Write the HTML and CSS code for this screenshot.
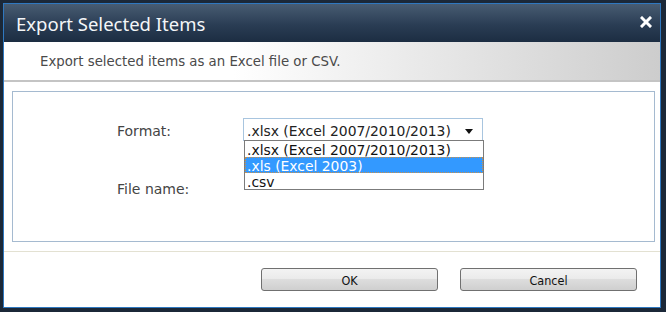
FILE: index.html
```html
<!DOCTYPE html>
<html lang="en">
<head>
    <meta charset="UTF-8">
    <title>Export Selected Items</title>
    <link rel="stylesheet" href="styles.css">
</head>
<body>
    <div class="dialog">
        <div class="title-bar">
            <h1>Export Selected Items</h1>
            <button class="close" title="Close">
                <svg width="12" height="12" viewBox="0 0 12 12">
                    <path d="M2 2 L10 10 M10 2 L2 10" stroke="#fff" stroke-width="3" stroke-linecap="square"/>
                </svg>
            </button>
        </div>
        <div class="subheader">Export selected items as an Excel file or CSV.</div>

        <div class="content">
            <div class="form-box">
                <div class="row format-row">
                    <label>Format:</label>
                    <div class="select-wrap">
                        <div class="select">
                            <span>.xlsx (Excel 2007/2010/2013)</span>
                            <i class="arrow"></i>
                        </div>
                        <ul class="dropdown">
                            <li>.xlsx (Excel 2007/2010/2013)</li>
                            <li class="active">.xls (Excel 2003)</li>
                            <li>.csv</li>
                        </ul>
                    </div>
                </div>
                <div class="row">
                    <label>File name:</label>
                </div>
            </div>
        </div>

        <div class="footer">
            <button class="btn">OK</button>
            <button class="btn">Cancel</button>
        </div>
    </div>
</body>
</html>
```

FILE: styles.css
```css
* {
    box-sizing: border-box;
    margin: 0;
    padding: 0;
}

body {
    background: #1b2838;
    width: 666px;
    height: 312px;
    padding: 3px 5px 0 3px;
    overflow: hidden;
    font-family: "DejaVu Sans", Verdana, sans-serif;
}

.dialog {
    width: 658px;
    height: 305px;
    border: 1px solid #2f78c0;
    background: white;
    display: flex;
    flex-direction: column;
}

.title-bar {
    height: 38px;
    background: linear-gradient(#485c72, #2a3d54 55%, #1c2d42);
    display: flex;
    align-items: center;
    justify-content: space-between;
    padding: 0 6px 0 12px;
}

.title-bar h1 {
    font-family: "Noto Sans", "Open Sans", sans-serif;
    font-weight: normal;
    font-size: 18.5px;
    color: #f4f6f8;
    margin-top: 1px;
}

.close {
    background: none;
    border: none;
    width: 14px;
    height: 14px;
    margin-top: -1px;
    display: flex;
}

.subheader {
    height: 40px;
    background: linear-gradient(to right, #ffffff 35%, #cdcdcd);
    color: #4a4a4a;
    font-size: 13.3px;
    padding: 0 0 0 36px;
    display: flex;
    align-items: center;
    border-bottom: 2px solid #c4c4c4;
}

.content {
    padding: 9px 5px 9px 8px;
    border-bottom: 1px solid #e3e1d2;
}

.form-box {
    height: 151px;
    border: 1px solid #a5bad0;
    padding: 26px 0 0 104px;
}

.row {
    display: flex;
    align-items: center;
    height: 23px;
}

.row + .row {
    margin-top: 35px;
}

.row label {
    width: 126px;
    color: #444;
    font-size: 14px;
    padding-top: 2px;
}

.select-wrap {
    position: relative;
    width: 240px;
}

.select {
    height: 23px;
    border: 1px solid #a8c5df;
    display: flex;
    align-items: center;
    justify-content: space-between;
    padding: 2px 9px 0 3px;
    font-size: 13.9px;
    color: #222;
}

.arrow {
    border-left: 4px solid transparent;
    border-right: 4px solid transparent;
    border-top: 5px solid #111;
    margin-top: 1px;
}

.dropdown {
    position: absolute;
    top: 22px;
    left: 1px;
    width: 240px;
    list-style: none;
    background: white;
    border: 1px solid #7b7b7b;
    font-size: 13.9px;
    color: #111;
}

.dropdown li {
    height: 16px;
    line-height: 16px;
    padding: 1px 0 0 2px;
}

.dropdown li.active {
    background: #3399ff;
    color: white;
    outline: 1px dotted #c9904a;
    outline-offset: -1px;
}

.footer {
    flex: 1;
    display: flex;
    gap: 22px;
    justify-content: flex-end;
    padding: 16px 23px 0 0;
}

.btn {
    width: 177px;
    height: 23px;
    border: 1px solid #707070;
    border-radius: 3px;
    background: linear-gradient(#f3f3f3, #ebebeb 45%, #dddddd 50%, #cfcfcf);
    font-family: "DejaVu Sans Condensed", Tahoma, sans-serif;
    font-size: 12.5px;
    color: #111;
    padding-top: 2px;
}
```
